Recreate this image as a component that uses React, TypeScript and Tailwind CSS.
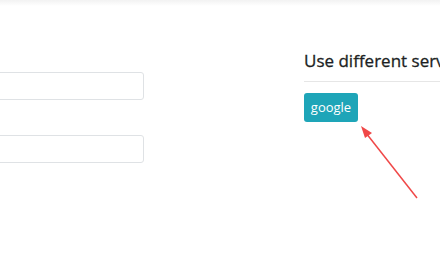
export default function App() {
  return (
    <div className="relative w-[440px] h-[264px] overflow-hidden bg-white font-['Open_Sans',sans-serif] text-[#212529]">
      {/* top bar shadow */}
      <div className="h-[6px] bg-gradient-to-b from-[#f2f2f2] to-white" />

      <div className="flex pt-[66px]">
        {/* login form column (cut off on the left) */}
        <div className="ml-[-60px] w-[204px] shrink-0 flex flex-col gap-[35px]">
          <input
            type="text"
            className="h-[28px] w-full rounded-[3px] border border-[#dfe2e5] bg-white"
          />
          <input
            type="password"
            className="h-[28px] w-full rounded-[3px] border border-[#dfe2e5] bg-white"
          />
        </div>

        {/* external providers column */}
        <div className="ml-[160px] w-[300px] shrink-0 -mt-[22px]">
          <h4 className="text-[17px] font-medium leading-[22px] whitespace-nowrap pb-[9px] border-b border-[#e6e6e6] text-[#1c1f23] [-webkit-text-stroke:0.3px_#1c1f23]">
            Use different service
          </h4>
          <button className="mt-[11px] h-[29px] w-[54px] rounded-[3px] bg-[#1ea5b8] text-white text-[13px] leading-none">
            google
          </button>
        </div>
      </div>

      {/* annotation arrow */}
      <svg className="absolute left-0 top-0" width="440" height="264" viewBox="0 0 440 264">
        <line x1="417" y1="198" x2="366" y2="133" stroke="#f04848" strokeWidth="1.5" />
        <polygon points="361,126 372,133 365,138" fill="#f04848" />
      </svg>
    </div>
  );
}
